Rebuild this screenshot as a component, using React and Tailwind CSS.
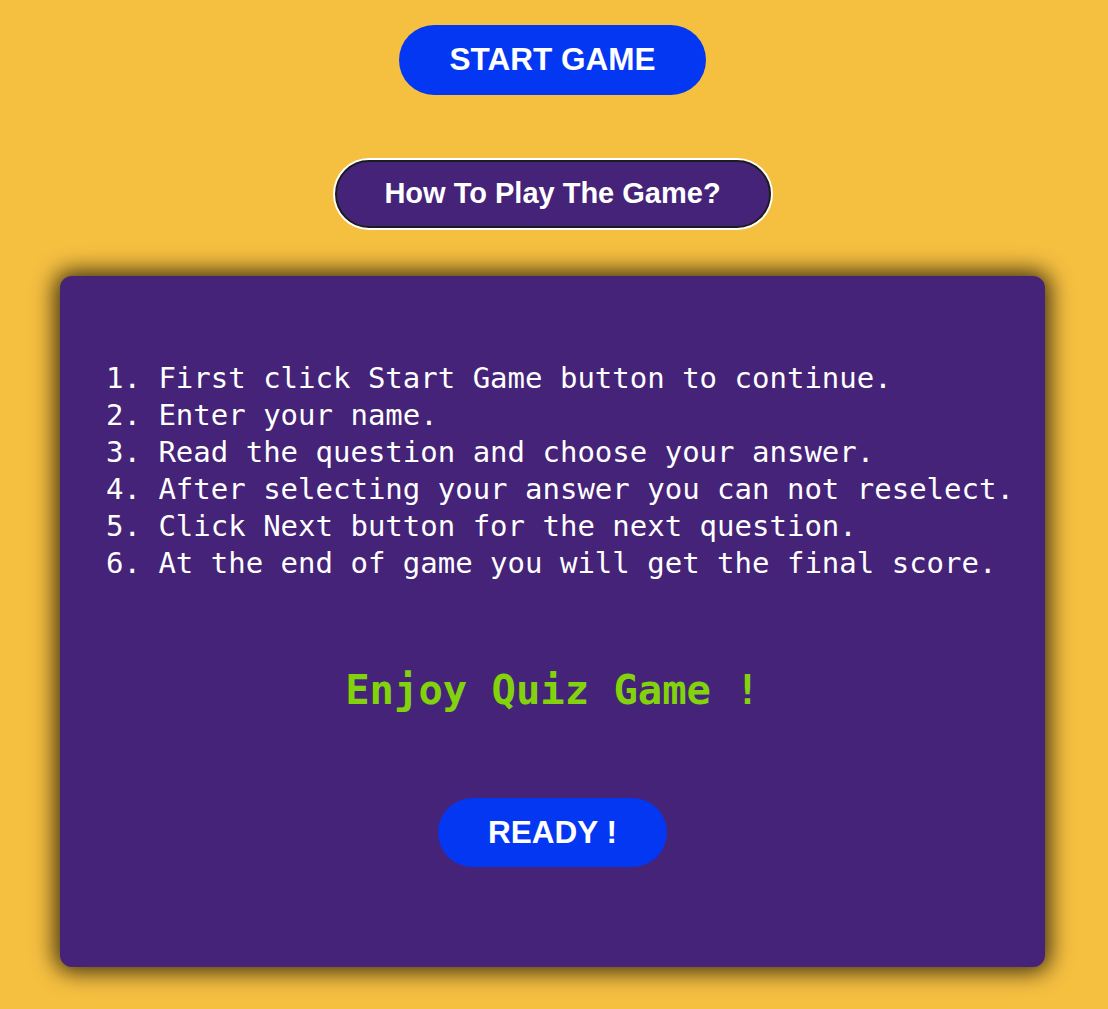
export default function App() {
  const steps = [
    "1. First click Start Game button to continue.",
    "2. Enter your name.",
    "3. Read the question and choose your answer.",
    "4. After selecting your answer you can not reselect.",
    "5. Click Next button for the next question.",
    "6. At the end of game you will get the final score.",
  ];
  return (
    <div className="min-h-screen w-full bg-[#f5bf40] flex flex-col items-center pt-[25px] pb-[42px] pr-[3px]">
      <button className="w-[307px] h-[70px] rounded-full bg-[#0437f2] text-white font-bold text-[31.5px] font-['Liberation_Sans',Arial,sans-serif] flex items-center justify-center">
        START GAME
      </button>
      <button className="mt-[65px] w-[436px] h-[68px] rounded-full bg-[#452379] border-2 border-[#1c1c1c] shadow-[0_0_0_2px_#ffffff] text-white font-bold text-[29px] font-['Liberation_Sans',Arial,sans-serif] flex items-center justify-center">
        How To Play The Game?
      </button>
      <div className="mt-[48px] w-[985px] h-[691px] rounded-[12px] bg-[#452379] shadow-[0_0_22px_5px_rgba(0,0,0,0.75)] flex flex-col items-center">
        <div className="self-stretch pl-[46px] pt-[84px] font-['DejaVu_Sans_Mono',monospace] text-[29px] leading-[37px] text-white whitespace-pre">
          {steps.map((s) => (
            <div key={s}>{s}</div>
          ))}
        </div>
        <div className="mt-[83px] h-[50px] leading-[50px] font-['DejaVu_Sans_Mono',monospace] font-bold text-[40.5px] text-[#82d30c]">
          Enjoy Quiz Game !
        </div>
        <button className="mt-[83px] w-[229px] h-[69px] rounded-full bg-[#0437f2] text-white font-bold text-[31.5px] font-['Liberation_Sans',Arial,sans-serif] flex items-center justify-center">
          READY !
        </button>
      </div>
    </div>
  );
}
